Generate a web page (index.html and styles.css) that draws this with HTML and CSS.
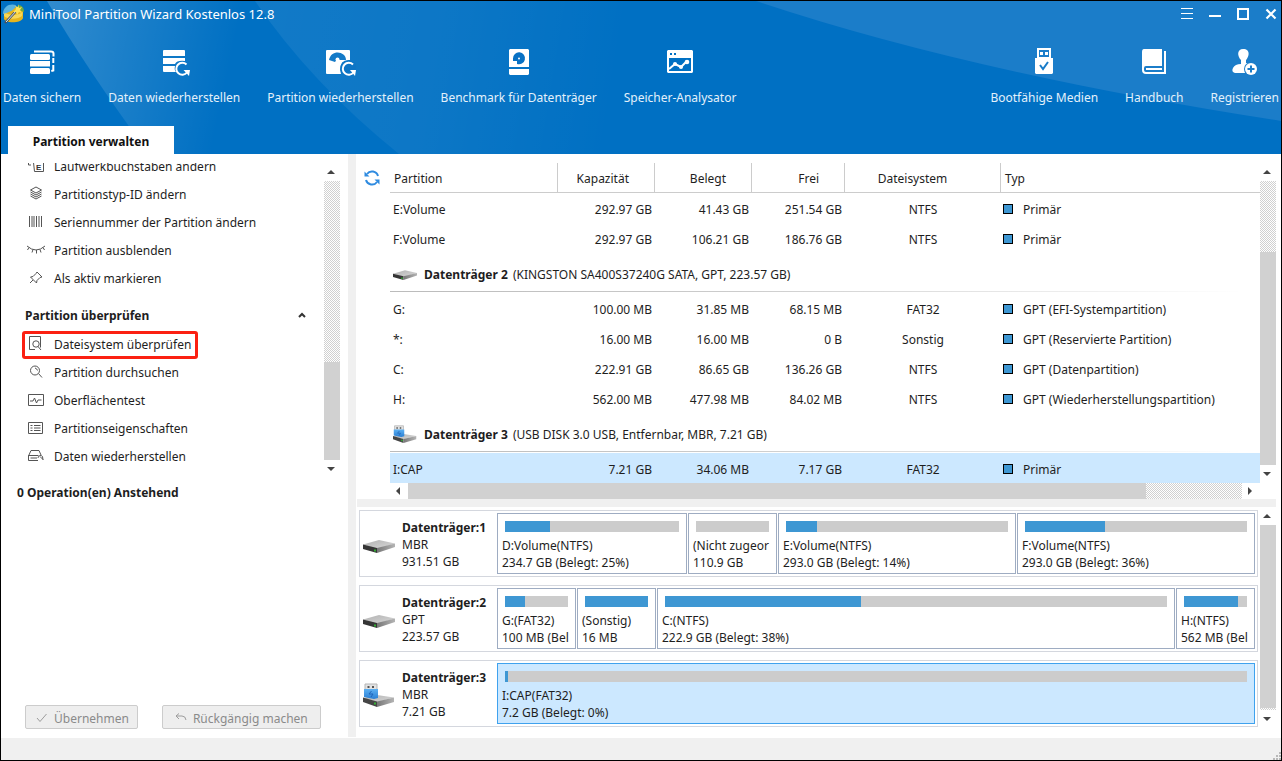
FILE: index.html
```html
<!DOCTYPE html>
<html lang="de">
<head>
<meta charset="utf-8">
<meta name="viewport" content="width=device-width, initial-scale=1">
<title>MiniTool Partition Wizard Kostenlos 12.8</title>
<link rel="stylesheet" href="styles.css">
</head>
<body>
<svg class="defs" aria-hidden="true">
  <defs>
    <linearGradient id="drive-top" x1="0" y1="0" x2="1" y2="1"><stop offset="0" stop-color="#b2b2b2"/><stop offset="1" stop-color="#d8d8d8"/></linearGradient>
    <linearGradient id="drive-side" x1="0" y1="0" x2="1" y2="0"><stop offset="0" stop-color="#777"/><stop offset="1" stop-color="#b4b4b4"/></linearGradient>
    <linearGradient id="usb-body" x1="0" y1="0" x2="0" y2="1"><stop offset="0" stop-color="#5cb0f2"/><stop offset="1" stop-color="#2a7fd4"/></linearGradient>
  </defs>
  <symbol id="drive" viewBox="0 0 32 24">
    <path d="M0 11.500 16 7l16 3.500L14 16z" fill="url(#drive-top)"/>
    <path d="M0 11.500 14 15v5L0 16z" fill="#353535"/>
    <path d="M14 15 32 10.500V14L14 20z" fill="url(#drive-side)"/>
    <path d="M12 16.500v2" stroke="#31d331" stroke-width="1.500"/>
  </symbol>
  <symbol id="usb-drive" viewBox="0 0 32 24">
    <path d="M0 15 14 12l17 2.500L14 19z" fill="url(#drive-top)"/>
    <path d="M0 14.500 14 18.500V24L0 19z" fill="#454545"/>
    <path d="M14 18.500 31 14.500V19L14 24z" fill="url(#drive-side)"/>
    <path d="M12 19.500v2" stroke="#31d331" stroke-width="1.500"/>
    <path d="M2 1h12v6H2z" fill="#e2e2e2" stroke="#b5b5b5"/>
    <path d="M4.500 3h2v2h-2zM9 3h2v2H9z" fill="#555"/>
    <path d="M1 6h14v9l-4 1-10-2z" fill="url(#usb-body)"/>
    <path d="M8.500 8 6 11h4l-2 3" stroke="#2065ba" fill="none"/>
  </symbol>
</svg>

<div class="window">
  <header class="header">
    <svg class="header-art" viewBox="0 0 1280 153" preserveAspectRatio="none" aria-hidden="true">
      <defs>
        <linearGradient id="beam-a" gradientUnits="userSpaceOnUse" x1="50" y1="0" x2="235" y2="40"><stop offset="0" stop-color="#fff" stop-opacity=".19"/><stop offset="1" stop-color="#fff" stop-opacity="0"/></linearGradient>
        <linearGradient id="beam-b" gradientUnits="userSpaceOnUse" x1="255" y1="0" x2="620" y2="60"><stop offset="0" stop-color="#fff" stop-opacity=".07"/><stop offset=".5" stop-color="#fff" stop-opacity=".05"/><stop offset="1" stop-color="#fff" stop-opacity="0"/></linearGradient>
      </defs>
      <path d="M46 0Q85 67 148 153H380L240 0z" fill="url(#beam-a)"/>
      <path d="M254 0Q310 82 398 153H700V0z" fill="url(#beam-b)"/>
      <path d="M755 0Q970 72 1280 120V0z" fill="#1b7dc9"/>
    </svg>

    <div class="titlebar">
      <svg class="app-logo" viewBox="0 0 22 22" aria-hidden="true">
        <path d="M1 8c0-4 18-5 19 1v6c-1 5-17 6-19 1z" fill="#e7b51d"/>
        <path d="M1 8c1 5 18 5 19 0l-1 5c-3 3-14 4-18 0z" fill="#f7d85a"/>
        <path d="M0 11C0 3 7 0 13 2c-1 5-6 7-13 9z" fill="#5db3df"/>
        <path d="M15 2c4 0 6 3 6 7l-7-3z" fill="#6ba843"/>
        <path d="M2 20 15 6" stroke="#455260" stroke-width="2.500"/>
        <path d="M3 19 14 7" stroke="#e3e8ed"/>
        <path d="m15 1 1 4 3-1-2 3 2 3-3-1-2 3-1-3-3 0 3-3-1-3 3 1z" fill="#ffe257"/>
      </svg>
      <h1 class="app-title">MiniTool Partition Wizard Kostenlos 12.8</h1>
      <div class="window-controls">
        <button class="window-btn" aria-label="Menü"><svg viewBox="0 0 12 12"><path d="M0 .5h12M0 5.500h12M0 10.500h12" stroke="#fff" fill="none"/></svg></button>
        <button class="window-btn" aria-label="Minimieren"><svg viewBox="0 0 12 12"><path d="M0 8h12" stroke="#fff" stroke-width="2"/></svg></button>
        <button class="window-btn" aria-label="Maximieren"><svg viewBox="0 0 12 12"><path d="M1 1h10v10H1z" stroke="#fff" stroke-width="2" fill="none"/></svg></button>
        <button class="window-btn" aria-label="Schließen"><svg viewBox="0 0 12 12"><path d="m1.500 1.500 9 9m0-9-9 9" stroke="#fff" stroke-width="2.200" fill="none"/></svg></button>
      </div>
    </div>

    <nav class="toolbar" aria-label="Werkzeuge">
      <button class="tool">
        <svg class="tool-icon" viewBox="0 0 32 32"><g fill="#fff"><rect x="4" y="7" width="20" height="6" rx="1.500"/><rect x="4" y="14" width="20" height="5.500"/><rect x="4" y="21" width="20" height="6" rx="1.500"/></g><path d="M8 4.500h17q2.500 0 2.500 2v3M27.300 11v5M27.300 18v5.500l-2 .5" stroke="#fff" stroke-width="2" fill="none"/></svg>
        <span>Daten sichern</span>
      </button>
      <button class="tool">
        <svg class="tool-icon" viewBox="0 0 32 32"><path d="M6 3h20q1 0 1 1v5H5V4q0-1 1-1zM5 11h22v3q-8-1-10 3H5zM5 19h12q-1 4 1 6H6q-1 0-1-1z" fill="#fff"/><path d="M28.500 17.500a6 6 0 1 0 .5 8" stroke="#fff" stroke-width="2" fill="none"/><path d="M25.500 23h6.500l-1 6z" fill="#fff"/></svg>
        <span>Daten wiederherstellen</span>
      </button>
      <button class="tool">
        <svg class="tool-icon" viewBox="0 0 32 32"><path d="M3 3h22q1 0 1 1v9q-10-1-10 10l1 4H3q-1 0-1-1V4q0-1 1-1z" fill="#fff"/><path d="M5 13C7 2 22 4 22 13h-7q-1-3-4 2z" fill="#147ac7"/><circle cx="13.500" cy="12.500" r="2" fill="#fff"/><circle cx="24.500" cy="21.500" r="8" fill="#0d75c5"/><path d="M29 17.500a6 6 0 1 0 .5 8" stroke="#fff" stroke-width="2" fill="none"/><path d="M26 23h6l-1 6z" fill="#fff"/></svg>
        <span>Partition wiederherstellen</span>
      </button>
      <button class="tool">
        <svg class="tool-icon" viewBox="0 0 32 32"><path fill="#fff" d="M7 2h18l1 1v17H6V3zM6 22h20v5l-1 1H7l-1-1z"/><path d="M10 11.500A6 6 0 1 1 14 17v-3h-4z" fill="#0871c4"/><circle cx="16" cy="11.500" r="1" fill="#fff"/></svg>
        <span>Benchmark für Datenträger</span>
      </button>
      <button class="tool">
        <svg class="tool-icon" viewBox="0 0 32 32"><path fill="#fff" fill-rule="evenodd" d="M4 3h24l1 1v21l-1 1H4l-1-1V4zM5 11v13h22V11zM6 6v2h2V6zm4 0v2h2V6z"/><path d="m5 22 6-5 6 3 6-6" stroke="#fff" stroke-width="2" fill="none"/><g fill="#fff"><circle cx="11" cy="17" r="2"/><circle cx="17" cy="20" r="2"/><circle cx="23" cy="15" r="2.300"/></g></svg>
        <span>Speicher-Analysator</span>
      </button>
      <span class="toolbar-space"></span>
      <button class="tool">
        <svg class="tool-icon" viewBox="0 0 32 32"><path fill="#fff" fill-rule="evenodd" d="M9 1h14v10h2v15l-1 1H8l-1-1V11h2zm2 2v7h10V3z"/><path d="M12 5h3v3h-3zM17 5h3v3h-3z" fill="#fff"/><path d="m12 18 3 4 5-7" stroke="#187bc8" stroke-width="2" fill="none"/></svg>
        <span>Bootfähige Medien</span>
      </button>
      <button class="tool">
        <svg class="tool-icon" viewBox="0 0 32 32"><path fill="#fff" d="M6 2h18v17H8q-2 0-2 2v2q0 2 2 2h18V4h2v23H8q-4 0-4-4V5q0-3 2-3z"/><path d="M8 21h16v2H8z" fill="#fff"/></svg>
        <span>Handbuch</span>
      </button>
      <button class="tool">
        <svg class="tool-icon" viewBox="0 0 32 32"><path fill="#fff" d="M14 2c8 0 6 8 3 11v3h5v10H6q-4-1-2-5 2-4 8-4v-4C8 9 8 2 14 2z"/><circle cx="22" cy="22" r="7" fill="#1b7dc9"/><circle cx="22" cy="22" r="6" fill="#fff"/><path d="M18.500 22h7M22 18.500v7" stroke="#1b7dc9" stroke-width="2"/></svg>
        <span>Registrieren</span>
      </button>
    </nav>

    <div class="tabs" role="tablist"><button class="tab" role="tab" aria-selected="true">Partition verwalten</button></div>
  </header>

  <div class="body">
    <aside class="sidebar">
      <div class="action-pane">
        <div class="actions">
          <ul class="action-list action-list-scrolled">
            <li><button class="action"><svg class="action-icon" viewBox="0 0 16 16"><path d="M.5 2v5H3M5.500 2v2" /><path d="M5.500 4.500h10v9h-9z"/><text class="icon-letter" x="8" y="12">E</text></svg>Laufwerkbuchstaben ändern</button></li>
            <li><button class="action"><svg class="action-icon" viewBox="0 0 16 16"><path d="m8 1 5.500 3L8 7 2.500 4zM2.500 6 8 9l5.500-3M2.500 8 8 11l5.500-3M2.500 10 8 13l5.500-3"/></svg>Partitionstyp-ID ändern</button></li>
            <li><button class="action"><svg class="action-icon" viewBox="0 0 16 16"><path d="M1.500 2v11M4 2v11M6 2v11M8.500 2v11M11 2v11M13.500 2v11"/></svg>Seriennummer der Partition ändern</button></li>
            <li><button class="action"><svg class="action-icon" viewBox="0 0 16 16"><path d="M-1 4q9 8 18 0M1 5.500-.5 8M5 7.500 4 10.500M8.500 8v3.500M12 7.500l1 3M15 5.500l1.500 2.500"/></svg>Partition ausblenden</button></li>
            <li><button class="action"><svg class="action-icon" viewBox="0 0 16 16"><path d="m9 2 5 5-2 .5-3 3-.5 2.500-6-6L5 6.500l3-3zM5 10l-3 3"/></svg>Als aktiv markieren</button></li>
          </ul>
          <h2 class="group-title"><button class="group-toggle" aria-expanded="true">Partition überprüfen<svg class="chevron" viewBox="0 0 8 6"><path d="m1 5 3-3 3 3"/></svg></button></h2>
          <ul class="action-list">
            <li><button class="action action-marked"><svg class="action-icon" viewBox="0 0 16 16"><path d="M7 13.500H1.500V.5h11v11"/><circle cx="8" cy="8" r="3.200"/><path d="m10 10.500 3 3.500"/></svg>Dateisystem überprüfen</button></li>
            <li><button class="action"><svg class="action-icon" viewBox="0 0 16 16"><circle cx="7" cy="6.500" r="4.500"/><path d="M7 4q2 .5 2.500 2.500M10.500 9.500l3.500 4"/></svg>Partition durchsuchen</button></li>
            <li><button class="action"><svg class="action-icon" viewBox="0 0 16 16"><path d="M.5 2.500h15v11H.5zM2 9h3l1.500-3 2 5L10 8h3.500"/></svg>Oberflächentest</button></li>
            <li><button class="action"><svg class="action-icon" viewBox="0 0 16 16"><path d="M.5 2.500h14v11H.5zM2.500 5.500h2M6 5.500h6.500M2.500 8h2M6 8h6.500M2.500 10.500h2M6 10.500h6.500"/></svg>Partitionseigenschaften</button></li>
            <li><button class="action"><svg class="action-icon" viewBox="0 0 16 16"><path d="M.5 8 3 2.500h8L13 7M.5 7.500h10M.5 7.500v5H10M2.500 10H9"/><path d="M10 10a2.500 2.500 0 0 1 4.500-1.500L15 12m-3-3.500 3 3"/></svg>Daten wiederherstellen</button></li>
          </ul>
        </div>
        <div class="scroll scroll-v scroll-actions" aria-hidden="true"><i class="arrow arrow-up"></i><div class="track"><div class="thumb"></div></div><i class="arrow arrow-down"></i></div>
      </div>
      <h2 class="pending">0 Operation(en) Anstehend</h2>
      <div class="commit-bar">
        <button class="commit" disabled><svg class="commit-icon" viewBox="0 0 12 12"><path d="m1 6 3 3.500L10.500 2"/></svg>Übernehmen</button>
        <button class="commit commit-undo" disabled><svg class="commit-icon" viewBox="0 0 12 12"><path d="M4 1.500 1 4l3 3M1 4h6q3.500 0 4 4"/></svg>Rückgängig machen</button>
      </div>
    </aside>

    <div class="splitter-v"></div>

    <main class="main">
      <div class="list-pane">
        <button class="refresh" aria-label="Aktualisieren"><svg viewBox="0 0 16 16"><path d="M14 6A6.200 6.200 0 0 0 3 4M2 10A6.200 6.200 0 0 0 13 12" fill="none" stroke="#2f8be0" stroke-width="2"/><path d="M.5 1.500v5h5zM15.500 14.500v-5h-5z" fill="#2f8be0"/></svg></button>
        <div class="list-column">
          <table class="volumes">
            <colgroup><col class="col-name"><col class="col-size"><col class="col-size"><col class="col-free"><col class="col-fs"><col></colgroup>
            <thead><tr><th>Partition</th><th class="num">Kapazität</th><th class="num">Belegt</th><th class="num">Frei</th><th class="fs">Dateisystem</th><th>Typ</th></tr></thead>
            <tbody>
              <tr><td>E:Volume</td><td class="num">292.97 GB</td><td class="num">41.43 GB</td><td class="num">251.54 GB</td><td class="fs">NTFS</td><td class="type"><i class="swatch"></i>Primär</td></tr>
              <tr><td>F:Volume</td><td class="num">292.97 GB</td><td class="num">106.21 GB</td><td class="num">186.76 GB</td><td class="fs">NTFS</td><td class="type"><i class="swatch"></i>Primär</td></tr>
              <tr class="disk-row"><td colspan="6"><div class="disk-head"><svg class="disk-icon-sm"><use href="#drive"/></svg><span><b>Datenträger 2</b> (KINGSTON SA400S37240G SATA, GPT, 223.57 GB)</span></div></td></tr>
              <tr><td>G:</td><td class="num">100.00 MB</td><td class="num">31.85 MB</td><td class="num">68.15 MB</td><td class="fs">FAT32</td><td class="type"><i class="swatch"></i>GPT (EFI-Systempartition)</td></tr>
              <tr><td>*:</td><td class="num">16.00 MB</td><td class="num">16.00 MB</td><td class="num">0 B</td><td class="fs">Sonstig</td><td class="type"><i class="swatch"></i>GPT (Reservierte Partition)</td></tr>
              <tr><td>C:</td><td class="num">222.91 GB</td><td class="num">86.65 GB</td><td class="num">136.26 GB</td><td class="fs">NTFS</td><td class="type"><i class="swatch"></i>GPT (Datenpartition)</td></tr>
              <tr><td>H:</td><td class="num">562.00 MB</td><td class="num">477.98 MB</td><td class="num">84.02 MB</td><td class="fs">NTFS</td><td class="type"><i class="swatch"></i>GPT (Wiederherstellungspartition)</td></tr>
              <tr class="disk-row"><td colspan="6"><div class="disk-head"><svg class="disk-icon-sm"><use href="#usb-drive"/></svg><span><b>Datenträger 3</b> (USB DISK 3.0 USB, Entfernbar, MBR, 7.21 GB)</span></div></td></tr>
              <tr class="selected"><td>I:CAP</td><td class="num">7.21 GB</td><td class="num">34.06 MB</td><td class="num">7.17 GB</td><td class="fs">FAT32</td><td class="type"><i class="swatch"></i>Primär</td></tr>
            </tbody>
          </table>
          <div class="scroll scroll-h scroll-list-h" aria-hidden="true"><i class="arrow arrow-left"></i><div class="track"><div class="thumb"></div></div><i class="arrow arrow-right"></i></div>
        </div>
        <div class="scroll scroll-v scroll-list" aria-hidden="true"><i class="arrow arrow-up"></i><div class="track"><div class="thumb"></div></div><i class="arrow arrow-down"></i></div>
      </div>

      <div class="splitter-h"></div>

      <div class="map-pane">
        <div class="map">
          <section class="disk">
            <div class="disk-info"><svg class="disk-icon"><use href="#drive"/></svg><div><b>Datenträger:1</b><br>MBR<br>931.51 GB</div></div>
            <div class="parts">
              <div class="part" style="flex-grow:180"><div class="bar"><div class="fill" style="width:26%"></div></div><p>D:Volume(NTFS)</p><p>234.7 GB (Belegt: 25%)</p></div>
              <div class="part" style="flex-grow:79"><div class="bar"></div><p>(Nicht zugeor</p><p>110.9 GB</p></div>
              <div class="part" style="flex-grow:228"><div class="bar"><div class="fill" style="width:14%"></div></div><p>E:Volume(NTFS)</p><p>293.0 GB (Belegt: 14%)</p></div>
              <div class="part" style="flex-grow:228"><div class="bar"><div class="fill" style="width:36%"></div></div><p>F:Volume(NTFS)</p><p>293.0 GB (Belegt: 36%)</p></div>
            </div>
          </section>
          <section class="disk">
            <div class="disk-info"><svg class="disk-icon"><use href="#drive"/></svg><div><b>Datenträger:2</b><br>GPT<br>223.57 GB</div></div>
            <div class="parts">
              <div class="part" style="flex-grow:69"><div class="bar"><div class="fill" style="width:32%"></div></div><p>G:(FAT32)</p><p>100 MB (Bel</p></div>
              <div class="part" style="flex-grow:69"><div class="bar"><div class="fill" style="width:100%"></div></div><p>(Sonstig)</p><p>16 MB</p></div>
              <div class="part" style="flex-grow:508"><div class="bar"><div class="fill" style="width:39%"></div></div><p>C:(NTFS)</p><p>222.9 GB (Belegt: 38%)</p></div>
              <div class="part" style="flex-grow:69"><div class="bar"><div class="fill" style="width:86%"></div></div><p>H:(NTFS)</p><p>562 MB (Bel</p></div>
            </div>
          </section>
          <section class="disk">
            <div class="disk-info"><svg class="disk-icon"><use href="#usb-drive"/></svg><div><b>Datenträger:3</b><br>MBR<br>7.21 GB</div></div>
            <div class="parts">
              <div class="part part-selected" style="flex-grow:748"><div class="bar"><div class="fill" style="width:0%"></div></div><p>I:CAP(FAT32)</p><p>7.2 GB (Belegt: 0%)</p></div>
            </div>
          </section>
        </div>
        <div class="scroll scroll-v scroll-map" aria-hidden="true"><i class="arrow arrow-up"></i><div class="track"><div class="thumb"></div></div><i class="arrow arrow-down"></i></div>
      </div>
    </main>
  </div>

  <footer class="statusbar"><svg class="grip" viewBox="0 0 8 8" aria-hidden="true"><path d="M6 0h2v2H6zM3 3h2v2H3zM6 3h2v2H6zM0 6h2v2H0zM3 6h2v2H3zM6 6h2v2H6z" fill="#b8b8b8"/></svg></footer>
</div>
</body>
</html>
```

FILE: styles.css
```css
*,
*::before,
*::after {
  box-sizing: border-box;
}

body {
  margin: 0;
  color: #1e1e1e;
  font: 12px/17px "Noto Sans", "Open Sans", sans-serif;
}

button {
  margin: 0;
  padding: 0;
  border: 0;
  background: none;
  color: inherit;
  font: inherit;
}

h1, h2, p, ul {
  margin: 0;
  padding: 0;
  font-size: inherit;
}

ul { list-style: none; }
svg { display: block; }
.defs { position: absolute; width: 0; height: 0; }

.window {
  display: flex;
  flex-direction: column;
  min-height: 100vh;
  border: 1px solid #000;
  background: #fff;
}

/* Header */
.header {
  position: relative;
  display: flex;
  flex-direction: column;
  background: #0070c3;
  color: #fff;
}

.header-art {
  position: absolute;
  inset: 0;
  width: 100%;
  height: 100%;
}

.titlebar, .toolbar, .tabs { position: relative; }

.titlebar {
  display: flex;
  align-items: center;
  height: 26px;
  padding: 0 4px 0 2px;
}

.app-logo { width: 22px; height: 22px; }

.app-title {
  flex: 1;
  margin-left: 4px;
  font-size: 13px;
  font-weight: 400;
}

.window-controls { display: flex; gap: 16px; }
.window-btn { width: 12px; height: 12px; }

.toolbar {
  display: flex;
  gap: 27px;
  height: 99px;
  padding: 20px 2px 0;
  color: #e4f1fb;
}

.toolbar-space { flex: 1; }

.tool {
  display: flex;
  flex-direction: column;
  align-items: center;
  gap: 10px;
  height: 59px;
  white-space: nowrap;
}

.tool-icon { width: 32px; height: 32px; }

.tabs { padding-left: 7px; }

.tab {
  width: 166px;
  height: 28px;
  padding-top: 2px;
  background: #fff;
  color: #111;
  font-weight: 700;
}

/* Body */
.body { display: flex; flex: 1; }

.sidebar {
  display: flex;
  flex: 0 0 347px;
  flex-direction: column;
  padding: 9px 8px 9px 0;
}

.action-pane { display: flex; height: 315px; }

.actions {
  flex: 1;
  overflow: hidden;
}

.action-list-scrolled { margin-top: -10px; }

.action {
  display: flex;
  align-items: center;
  gap: 10px;
  height: 28px;
  margin-left: 21px;
  padding: 0 4px 2px 3px;
  border: 3px solid transparent;
  white-space: nowrap;
}

.action-marked {
  border-color: #fb2012;
  border-radius: 3px;
}

.action-icon {
  width: 16px;
  height: 16px;
  overflow: visible;
  fill: none;
  stroke: #555;
}

.icon-letter {
  fill: #333;
  stroke: none;
  font: 700 8px "Liberation Sans", sans-serif;
}

.group-toggle {
  display: flex;
  align-items: center;
  justify-content: space-between;
  width: 100%;
  height: 38px;
  padding: 6px 18px 0 24px;
  font-weight: 700;
}

.chevron {
  width: 8px;
  height: 6px;
  fill: none;
  stroke: #333;
  stroke-width: 2;
}

.pending { padding: 6px 16px; }

.commit-bar {
  display: flex;
  gap: 24px;
  margin-top: auto;
  padding-left: 24px;
}

.commit {
  display: flex;
  align-items: center;
  gap: 6px;
  height: 24px;
  padding: 2px 8px 0 10px;
  border: 1px solid #ccc;
  border-radius: 2px;
  background: #eee;
  color: #8a8a8a;
  white-space: nowrap;
}

.commit-undo { padding: 2px 12px 0 12px; }

.commit-icon {
  width: 12px;
  height: 12px;
  fill: none;
  stroke: #9c9c9c;
}

.splitter-v {
  flex: 0 0 8px;
  margin-bottom: 1px;
  background: #f0f0f0;
}

.main {
  display: flex;
  flex: 1;
  flex-direction: column;
  min-width: 0;
  padding: 9px 5px 10px 1px;
}

/* Volume list */
.list-pane { display: flex; }

.refresh {
  flex: 0 0 33px;
  height: 30px;
  padding-left: 7px;
}

.refresh svg { width: 16px; height: 16px; }

.list-column { flex: 1; min-width: 0; }

.volumes {
  width: 100%;
  border-collapse: separate;
  border-spacing: 0;
  table-layout: fixed;
  white-space: nowrap;
}

.col-name { width: 168px; }
.col-size { width: 97px; }
.col-free { width: 93px; }
.col-fs { width: 156px; }

.volumes th {
  height: 30px;
  padding: 2px 4px 0;
  border-right: 1px solid #ccc;
  border-bottom: 1px solid #ccc;
  font-weight: 400;
  text-align: left;
}

.volumes th:last-child { border-right: 0; }
.volumes th.num { padding-right: 25px; text-align: right; }
.volumes th.fs { padding-right: 24px; text-align: center; }

.volumes td {
  height: 30px;
  padding: 2px 3px 0;
}

.volumes .num { text-align: right; }
.volumes .fs { text-align: center; }
.volumes .type { padding-left: 2px; }

.swatch {
  display: inline-block;
  width: 10px;
  height: 10px;
  margin-right: 10px;
  border: 1px solid #000;
  background: #3e97d3;
}

.volumes .disk-row td { height: 40px; padding: 0 0 1px; }

.disk-head {
  display: flex;
  align-items: center;
  gap: 7px;
  height: 39px;
  padding: 3px 3px 0;
  background: linear-gradient(to right, #bbb, #ccc 40%, #fff 98%) 0 100% / 100% 1px no-repeat;
}

.disk-head b { margin-right: 2px; }
.disk-icon-sm { width: 24px; height: 20px; }

.selected td { background: #cce8ff; }

/* Scrollbars */
.scroll { display: flex; }
.scroll-v { flex: 0 0 16px; flex-direction: column; }
.scroll-h { height: 16px; }

.track {
  display: flex;
  flex: 1;
  background: repeating-conic-gradient(#d0d0d0 0 25%, #fff 0 50%) 0 0 / 2px 2px;
}

.scroll-v .track { flex-direction: column; }
.thumb { background: #d1d1d1; }

.arrow {
  display: flex;
  flex: 0 0 18px;
  align-items: center;
  justify-content: center;
  padding-right: 2px;
}

.arrow::before {
  border: 4px solid transparent;
  content: "";
}

.arrow-up::before { border-top: 0; border-bottom-color: #444; }
.arrow-down::before { border-bottom: 0; border-top-color: #444; }
.arrow-left::before { border-left: 0; border-right-color: #444; }
.arrow-right::before { border-right: 0; border-left-color: #444; }

.scroll-actions .track { justify-content: flex-end; }
.scroll-actions .thumb { height: 35%; }
.scroll-list { margin-bottom: 16px; }
.scroll-list .track { justify-content: flex-end; }
.scroll-list .thumb { height: 75%; }
.scroll-list-h .thumb { width: 88.5%; }
.scroll-map .thumb { height: 99%; }

.splitter-h { height: 8px; background: #f0f0f0; }

/* Disk map */
.map-pane { display: flex; flex: 1; }

.map {
  display: flex;
  flex: 1;
  flex-direction: column;
  gap: 8px;
  min-width: 0;
  padding: 3px 2px 0;
}

.disk {
  display: flex;
  height: 67px;
  padding: 2px;
  border: 1px solid #d4d7de;
}

.disk-info {
  display: flex;
  flex: 0 0 135px;
  align-items: center;
  gap: 7px;
  padding: 2px 0 0 1px;
  white-space: nowrap;
}

.disk-icon { flex: 0 0 32px; height: 24px; }

.parts { display: flex; flex: 1; gap: 1px; min-width: 0; }

.part {
  flex: 1 1 0;
  min-width: 0;
  padding: 7px 4px 0;
  overflow: hidden;
  border: 1px solid #9eacc2;
  white-space: nowrap;
}

.part-selected { border-color: #3fa2ee; background: #cce8ff; }

.bar {
  height: 11px;
  margin: 0 3px 5px;
  background: #ccc;
}

.fill {
  min-width: 3px;
  height: 100%;
  background: #3e97d3;
}

/* Status bar */
.statusbar {
  display: flex;
  align-items: flex-end;
  justify-content: flex-end;
  height: 22px;
  background: #f0f0f0;
}

.grip { width: 8px; height: 8px; }
```
